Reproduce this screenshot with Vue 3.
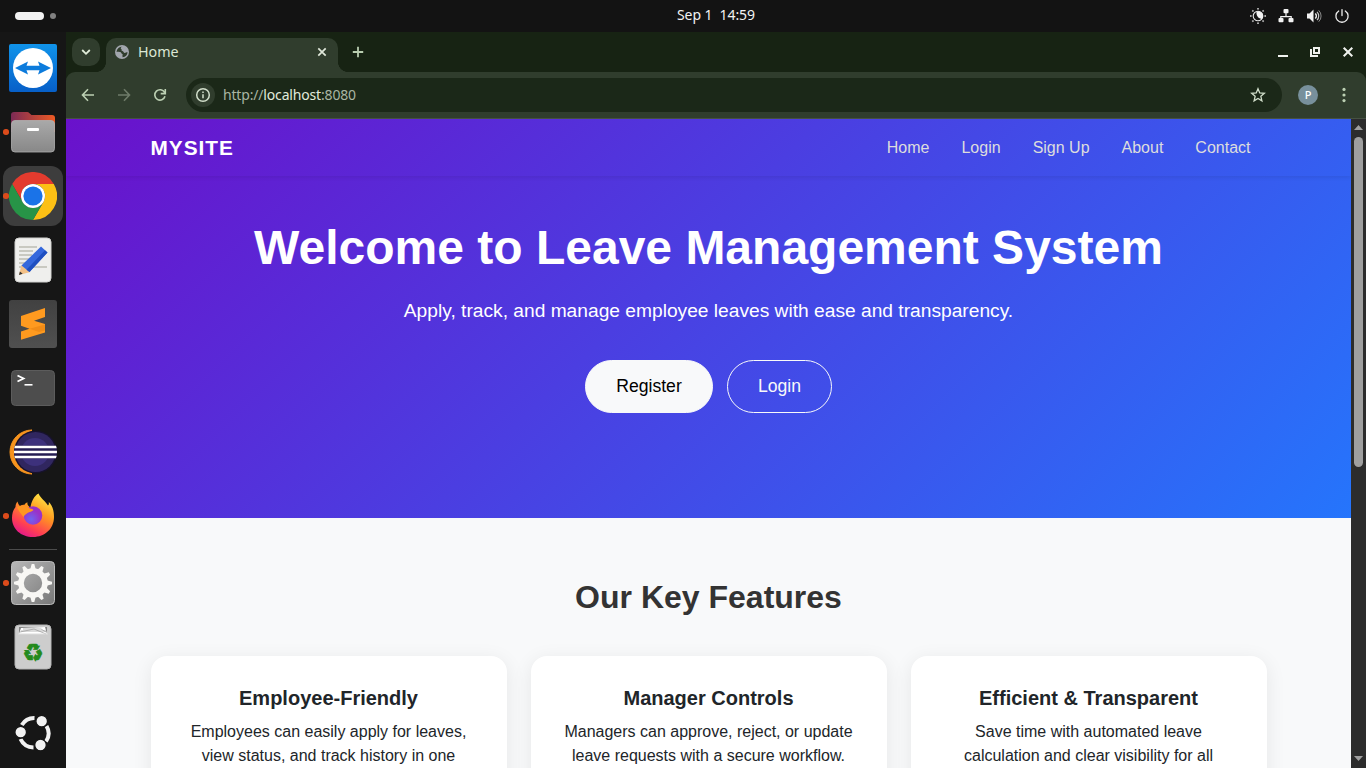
<script setup>
const links = ['Home', 'Login', 'Sign Up', 'About', 'Contact']
const cards = [
  { title: 'Employee-Friendly', lines: ['Employees can easily apply for leaves,', 'view status, and track history in one'] },
  { title: 'Manager Controls', lines: ['Managers can approve, reject, or update', 'leave requests with a secure workflow.'] },
  { title: 'Efficient & Transparent', lines: ['Save time with automated leave', 'calculation and clear visibility for all'] }
]
const teeth = Array.from({ length: 12 }, (_, i) => i * 30)
const rays = Array.from({ length: 8 }, (_, i) => i * 45)
</script>

<template>
  <div class="screen">
    <header class="topbar">
      <div class="workspaces"><span class="pill"></span><span class="dot"></span></div>
      <div class="clock">Sep 1&nbsp; 14:59</div>
      <div class="tray">
        <svg width="16" height="16" viewBox="0 0 16 16">
          <circle cx="8" cy="8" r="4.8" fill="none" stroke="#e8e8e8" stroke-width="1.1" />
          <path d="M6.500 3.600a4.800 4.800 0 0 1 5.500 7.400C8.500 11 6 8 6.500 3.600z" fill="#f2f2f2" />
          <rect v-for="r in rays" :key="r" x="7.2" y="0" width="1.6" height="1.6" fill="#c8c8c8" :transform="`rotate(${r} 8 8)`" />
        </svg>
        <svg width="16" height="16" viewBox="0 0 16 16">
          <path d="M8 5v4M2.8 11V8.7h10.4V11" fill="none" stroke="#f2f2f2" stroke-width="1.2" />
          <rect x="5.5" y="1" width="5" height="4.3" rx="1" fill="#f2f2f2" />
          <rect x="0.5" y="10" width="5" height="4.3" rx="1" fill="#f2f2f2" />
          <rect x="10.5" y="10" width="5" height="4.3" rx="1" fill="#f2f2f2" />
        </svg>
        <svg width="16" height="16" viewBox="0 0 16 16">
          <path d="M1 5.5h2.5L7.5 1.6v12.8L3.500 10.500H1z" fill="#f2f2f2" />
          <path d="M9.300 5.500a3.500 3.500 0 0 1 0 5" fill="none" stroke="#f2f2f2" stroke-width="1.4" />
          <path d="M11 3.800a6 6 0 0 1 0 8.400" fill="none" stroke="#c8c8c8" stroke-width="1.200" />
          <path d="M12.700 2.300a8 8 0 0 1 0 11.400" fill="none" stroke="#8c8c8c" stroke-width="1" />
        </svg>
        <svg width="16" height="16" viewBox="0 0 16 16" fill="none" stroke="#efefef" stroke-width="1.300" stroke-linecap="round">
          <path d="M4.700 3a6.100 6.100 0 1 0 6.600 0M8 1.600v6" />
        </svg>
      </div>
    </header>

    <div class="desktop">
      <aside class="dock">
        <div class="slot">
          <svg width="48" height="48" viewBox="0 0 48 48">
            <defs><linearGradient id="tv" x1="0" y1="0" x2="0" y2="1"><stop offset="0" stop-color="#1093ea" /><stop offset="1" stop-color="#075fc8" /></linearGradient></defs>
            <rect width="48" height="48" rx="2" fill="url(#tv)" />
            <circle cx="24" cy="24" r="20" fill="#fff" />
            <path d="M6 24l13-6.500-1.500 4.300h13L29 17.500l13 6.500-13 6.500 1.500-4.300h-13L19 30.500z" fill="#0c7bdc" />
          </svg>
        </div>
        <div class="slot run">
          <svg width="48" height="48" viewBox="0 0 48 48">
            <defs>
              <linearGradient id="fd" x1="0" y1="0" x2="1" y2="0"><stop offset="0" stop-color="#7b2a55" /><stop offset="1" stop-color="#ee5a24" /></linearGradient>
              <linearGradient id="gr" x1="0" y1="0" x2="0" y2="1"><stop offset="0" stop-color="#a9a9a9" /><stop offset="1" stop-color="#888" /></linearGradient>
            </defs>
            <path d="M2 7a3 3 0 0 1 3-3h13q1.500 0 2.500 1.200L22.500 7H43a3 3 0 0 1 3 3v14H2z" fill="url(#fd)" />
            <rect x="2.500" y="12.500" width="43" height="31.500" rx="3.500" fill="url(#gr)" stroke="#b0b0b0" stroke-width=".8" />
            <rect x="18" y="20" width="12" height="3" rx="1" fill="#fff" />
          </svg>
        </div>
        <div class="slot run active">
          <svg width="48" height="48" viewBox="0 0 48 48">
            <path d="M3.200 12a24 24 0 0 1 41.600 0H24a12 12 0 0 0-10.400 18z" fill="#e33b2e" />
            <path d="M44.800 12A24 24 0 0 1 24 48l10.400-18A12 12 0 0 0 24 12z" fill="#fcc015" />
            <path d="M3.200 12A24 24 0 0 0 24 48l10.400-18a12 12 0 0 1-20.800 0z" fill="#279447" />
            <circle cx="24" cy="24" r="12" fill="#fff" /><circle cx="24" cy="24" r="9.600" fill="#1a73e8" />
          </svg>
        </div>
        <div class="slot">
          <svg width="48" height="48" viewBox="0 0 48 48">
            <rect x="6" y="2" width="36" height="44" rx="4" fill="#efefed" stroke="#d2d2d0" />
            <path d="M10 11h18M10 15h14M10 19h13M10 23h11M10 27h9M10 31h28" stroke="#bdbdb3" stroke-width="1.700" />
            <path d="M10 39l2.500-10 9 7z" fill="#f2c086" /><path d="M10 39l.9-3.500 2.800 2.300z" fill="#333" />
            <path d="M12.500 29.500L32 10.500l6.500 6L20.500 36z" fill="#3568dc" />
            <path d="M17.500 33.700L36 14.200l2.500 2.300L20.500 36z" fill="#1f4fc0" />
          </svg>
        </div>
        <div class="slot">
          <svg width="48" height="48" viewBox="0 0 48 48">
            <defs><linearGradient id="sb" x1="0" y1="0" x2="0" y2="1"><stop offset="0" stop-color="#414141" /><stop offset="1" stop-color="#505050" /></linearGradient></defs>
            <rect width="48" height="48" rx="3" fill="url(#sb)" />
            <path d="M12 16l24-8v9l-11 3.700 11 3.300v8.500L12 39.700V31.500l8.500-2.700L12 25.800z" fill="#ff9a1f" />
            <path d="M20.500 28.800L36 24.500v6l-6 1.500z" fill="#f18c17" />
          </svg>
        </div>
        <div class="slot">
          <svg width="48" height="48" viewBox="0 0 48 48">
            <rect x="2.500" y="6.500" width="43" height="35" rx="4" fill="#4d4d4d" stroke="#5c5c5c" />
            <path d="M8.500 11.500l6 3-6 3" fill="none" stroke="#fff" stroke-width="1.900" /><path d="M15.500 20.800h8" stroke="#fff" stroke-width="1.600" />
          </svg>
        </div>
        <div class="slot">
          <svg width="48" height="48" viewBox="0 0 48 48">
            <defs><clipPath id="ec"><circle cx="26.500" cy="24" r="21.500" /></clipPath></defs>
            <path d="M23 2a22 22 0 0 0 0 44A27 27 0 0 1 23 2z" fill="#f7941e" stroke="#f7941e" stroke-width="1" />
            <circle cx="26.500" cy="24" r="21.500" fill="#17122d" /><circle cx="26.500" cy="24" r="20" fill="#30265f" />
            <circle cx="26" cy="24" r="14" fill="#3d317c" />
            <g clip-path="url(#ec)"><path d="M4 24h44" stroke="#251d52" stroke-width="13" /><path d="M4 19h44M4 24h44M4 29h44" stroke="#fff" stroke-width="2.300" /></g>
          </svg>
        </div>
        <div class="slot run">
          <svg width="48" height="48" viewBox="0 0 48 48">
            <defs>
              <linearGradient id="ff" x1=".8" y1="0" x2=".25" y2="1"><stop offset="0" stop-color="#fff14a" /><stop offset=".4" stop-color="#ff9820" /><stop offset=".75" stop-color="#ff4052" /><stop offset="1" stop-color="#e01590" /></linearGradient>
              <radialGradient id="fp" cx=".4" cy=".7"><stop offset="0" stop-color="#6e63f2" /><stop offset="1" stop-color="#9a32c8" /></radialGradient>
            </defs>
            <path d="M29.500 1.500c2 5 7 7.500 9.500 12 1-1 1-2 .8-3.500C44 14 45 20 45 25c0 11.500-9 20-21 20S3 37 3 26c0-5 1.500-8.500 3.500-11 0-2 .7-4 2-5.500.5 2 1.500 3.500 2.500 4.500 1.500-1 3-1.200 4.500-1.200.5-1 1.500-2 3-2.500-.5 2 .5 3.500 3 5.500C22 10 25 4 29.500 1.500z" fill="url(#ff)" />
            <circle cx="24" cy="23.500" r="9.300" fill="url(#fp)" />
            <path d="M8 15c5-2 9-2 13 1.500 1.500.5 3 .5 3.500 1.500-1.500 1.800-4 2-6 3-1 1.200-3 1.500-4 4-3-4-5-6-6.500-10z" fill="#ff9722" />
          </svg>
        </div>
        <div class="divider"></div>
        <div class="slot run">
          <svg width="48" height="48" viewBox="0 0 48 48">
            <defs><linearGradient id="st" x1="0" y1="0" x2="1" y2="1"><stop offset="0" stop-color="#b8b8b8" /><stop offset="1" stop-color="#777" /></linearGradient></defs>
            <rect x="2.500" y="2.500" width="43" height="43" rx="4" fill="url(#st)" stroke="#bbb" />
            <circle cx="24" cy="24" r="12" fill="none" stroke="#f8f7f4" stroke-width="5.600" />
            <path v-for="t in teeth" :key="t" d="M21.200 10.500L22.700 5h2.600l1.500 5.500z" fill="#f8f7f4" :transform="`rotate(${t} 24 24)`" />
          </svg>
        </div>
        <div class="slot">
          <svg width="48" height="48" viewBox="0 0 48 48">
            <rect x="6" y="2" width="36" height="44" rx="4" fill="#cdcdcd" stroke="#b4b4b4" />
            <path d="M10 4h28v7H10z" fill="#858585" /><path d="M10 11l2-6 24-1 2 7z" fill="#fff" />
            <path d="M11 9l14-3 12 5M14 6h18l5 3M12 8h25" stroke="#999" stroke-width=".7" fill="none" />
            <path d="M9 11h30" stroke="#ddd" />
            <text x="24" y="38" class="recycle">♻</text>
          </svg>
        </div>
        <svg class="ubuntu" width="36" height="36" viewBox="0 0 36 36">
          <g fill="none" stroke="#f2f2f2" stroke-width="4">
            <path d="M6.800 10A14.500 14.500 0 0 1 19.500 3M31.500 11A14.500 14.500 0 0 1 31 26.500M5.500 24a14.500 14.500 0 0 0 13 8.400" />
          </g>
          <g fill="#f2f2f2" stroke="#161616" stroke-width="1.300"><circle cx="5.700" cy="17.200" r="5.800" /><circle cx="26.700" cy="6.200" r="5.800" /><circle cx="25.500" cy="30" r="5.800" /></g>
        </svg>
      </aside>

      <div class="browser">
        <div class="tabstrip">
          <div class="tabsearch"><svg width="10" height="10" viewBox="0 0 10 10"><path d="M1.200 3L5 6.800 8.800 3" /></svg></div>
          <div class="tab">
            <svg width="14" height="14" viewBox="0 0 14 14"><circle cx="7" cy="7" r="7" fill="#a2a6ad" /><path d="M7.500 1.800c-1.500.4-2.500 1.200-1.300 2.200 1.200.8-.5 1.600 1.200 2 1.600.3.800 1.800 2.200 1.900 1 .1 1.500-.6 3-.6a5.500 5.500 0 0 1-5 4.900c-.2-1.300-.2-2 .1-2.900-1.800-.2-1-2.200-2.800-2.300-1.500-.1-2-.2-3.400-.1a5.600 5.600 0 0 1 6-5.100z" fill="#303d2d" /></svg>
            <span>Home</span>
            <svg class="tabclose" width="10" height="10" viewBox="0 0 10 10"><path d="M1.300 1.300l7.400 7.400M8.700 1.300L1.300 8.700" /></svg>
          </div>
          <svg class="newtab" width="12" height="12" viewBox="0 0 12 12"><path d="M6 .8v10.400M.8 6h10.400" /></svg>
          <div class="wincontrols">
            <svg width="12" height="12" viewBox="0 0 12 12"><path d="M1 10h10" /></svg>
            <svg width="12" height="12" viewBox="0 0 12 12"><path d="M5 2h5v5H5zM2 3v7h7" /></svg>
            <svg width="12" height="12" viewBox="0 0 12 12"><path d="M1.700 1.700l8.600 8.600M10.300 1.700l-8.600 8.600" /></svg>
          </div>
        </div>
        <div class="toolbar">
          <svg width="16" height="16" viewBox="0 0 16 16"><path d="M14 8H2.700M8 2.300L2.500 8 8 13.700" /></svg>
          <svg class="dim" width="16" height="16" viewBox="0 0 16 16"><path d="M2 8h11.300M8 2.300L13.500 8 8 13.700" /></svg>
          <svg width="16" height="16" viewBox="0 0 16 16"><path d="M13 9.300A5.200 5.200 0 1 1 12.600 5.500M13.300 2v4.600H8.700" /></svg>
          <div class="omnibox">
            <span class="info"><svg width="16" height="16" viewBox="0 0 16 16"><circle cx="8" cy="8" r="6.300" /><path d="M8 7.300v4M8 4.500v1.600" /></svg></span>
            <span class="url"><i>http://</i>localhost<i>:8080</i></span>
            <svg class="star" width="16" height="16" viewBox="0 0 16 16"><path d="M8 1.700l1.750 4.250 4.600.4-3.500 3 1.050 4.500L8 11.450l-3.900 2.400 1.050-4.500-3.500-3 4.600-.4z" /></svg>
          </div>
          <div class="avatar">P</div>
          <svg class="kebab" width="4" height="16" viewBox="0 0 4 16"><circle cx="2" cy="2.400" r="1.600" /><circle cx="2" cy="8" r="1.600" /><circle cx="2" cy="13.600" r="1.600" /></svg>
        </div>

        <div class="viewport">
          <div class="page">
            <section class="hero">
              <nav>
                <b>MYSITE</b>
                <div class="links"><a v-for="l in links" :key="l">{{ l }}</a></div>
              </nav>
              <h1>Welcome to Leave Management System</h1>
              <p>Apply, track, and manage employee leaves with ease and transparency.</p>
              <div class="buttons"><button class="solid">Register</button><button class="outline">Login</button></div>
            </section>
            <section class="features">
              <h2>Our Key Features</h2>
              <div class="cards">
                <article v-for="c in cards" :key="c.title">
                  <h3>{{ c.title }}</h3>
                  <div v-for="line in c.lines" :key="line">{{ line }}</div>
                </article>
              </div>
            </section>
          </div>
          <div class="scrollbar">
            <svg width="9" height="5" viewBox="0 0 9 5"><path d="M4.500 0L9 5H0z" /></svg>
            <span></span>
            <svg class="down" width="9" height="5" viewBox="0 0 9 5"><path d="M0 0h9L4.500 5z" /></svg>
          </div>
        </div>
      </div>
    </div>
  </div>
</template>

<style>
body { margin: 0; background: #141414; overflow: hidden; }
</style>

<style scoped>
* { box-sizing: border-box; }
svg { display: block; flex: none; }
.screen { width: 1366px; height: 768px; overflow: hidden; display: flex; flex-direction: column; background: #161616; font-family: "Noto Sans", sans-serif; }
.topbar { height: 32px; flex: none; background: #131313; display: grid; grid-template-columns: 612px auto 1fr; align-items: center; color: #f2f2f2; }
.workspaces { display: flex; align-items: center; gap: 6px; padding-left: 15px; }
.pill { width: 29px; height: 8px; border-radius: 4px; background: #f2f2f2; }
.dot { width: 6px; height: 6px; border-radius: 50%; background: #818181; }
.clock { font-size: 14px; line-height: 20px; letter-spacing: -.08px; padding: 0 0 2px 65px; white-space: pre; }
.tray { display: flex; justify-content: flex-end; gap: 12px; padding-right: 16px; }
.desktop { display: flex; flex: 1; min-height: 0; }
.dock { width: 66px; flex: none; background: #161616; display: flex; flex-direction: column; align-items: center; padding-top: 6px; }
.slot { width: 60px; height: 60px; flex: none; margin-bottom: 4px; border-radius: 12px; display: grid; place-items: center; position: relative; }
.active { background: #3d3d3d; }
.run::before { content: ""; position: absolute; left: 0; top: 27px; width: 5.5px; height: 5.5px; border-radius: 50%; background: #dc4b1b; }
.divider { height: 1px; width: 48px; background: #4c4c4c; margin-top: -1px; margin-bottom: 3px; flex: none; }
.recycle { font: bold 24px "DejaVu Sans", sans-serif; text-anchor: middle; fill: #238a1c; stroke: #238a1c; stroke-width: .7px; }
.ubuntu { margin: 34px 1px 0 0; }
.browser { width: 1300px; display: flex; flex-direction: column; background: #172313; }
.tabstrip { height: 40px; flex: none; display: flex; padding-left: 6px; padding-top: 6px; }
.tabsearch { width: 28px; height: 28px; border-radius: 10px; background: #303d2d; display: grid; place-items: center; }
.tabsearch svg { fill: none; stroke: #e0ecd9; stroke-width: 1.8; }
.tab { margin-left: 6px; width: 232px; height: 34px; border-radius: 10px 10px 0 0; background: #303d2d; display: flex; align-items: center; padding: 0 11px 6px 9px; color: #dce7d5; font-size: 14.3px; position: relative; }
.tab::before, .tab::after { content: ""; position: absolute; bottom: 0; width: 10px; height: 10px; }
.tab::before { left: -10px; background: radial-gradient(circle at 0 0, transparent 9.7px, #303d2d 10.2px); }
.tab::after { right: -10px; background: radial-gradient(circle at 100% 0, transparent 9.7px, #303d2d 10.2px); }
.tab span { margin-left: 9px; line-height: 20px; }
.tabclose { margin-left: auto; stroke: #e0e8da; stroke-width: 1.7; }
.newtab { margin: 8px 0 0 14px; stroke: #b9cdb0; stroke-width: 1.8; }
.wincontrols { margin: 8px 12px 0 auto; display: flex; gap: 21px; }
.wincontrols svg { fill: none; stroke: #f0f2ee; stroke-width: 2; }
.wincontrols svg:nth-child(2) { margin-left: -1px; }
.toolbar { height: 47px; flex: none; background: #303d2d; border-bottom: 1px solid #465143; border-radius: 9px 9px 0 0; display: flex; align-items: center; padding: 0 20px 0 14px; }
.toolbar > svg { fill: none; stroke: #bcd0b3; stroke-width: 1.6; margin-right: 20px; }
.toolbar .dim { stroke: #6e7b69; }
.toolbar > .kebab { fill: #bcd0b3; stroke: none; margin: 0 0 0 24px; }
.omnibox { margin-left: -2px; width: 1096px; height: 34px; border-radius: 17px; background: #1b2818; display: flex; align-items: center; padding: 0 16px 0 5px; }
.info { width: 24px; height: 24px; border-radius: 50%; background: #303d2d; display: grid; place-items: center; }
.info svg, .star { fill: none; stroke: #d2dfcb; stroke-width: 1.5; }
.star { stroke-width: 1.3; margin-left: auto; }
.url { margin-left: 8px; font-size: 14px; color: #e2ebdc; line-height: 20px; letter-spacing: -.17px; }
.url i { font-style: normal; color: #a9b5a3; }
.avatar { margin-left: 16px; width: 20px; height: 20px; border-radius: 50%; background: #78909c; color: #fff; font-size: 11px; font-weight: 500; line-height: 20px; text-align: center; }
.viewport { flex: 1; min-height: 0; display: flex; }
.page { width: 1285px; overflow: hidden; background: #f8f9fa; font-family: "Liberation Sans", Arial, sans-serif; text-align: center; color: #212529; }
.hero { height: 399px; background: linear-gradient(135deg, #6a11cb, #2575fc); color: #fff; }
nav { height: 57px; padding: 0 100.5px 0 84.5px; display: flex; justify-content: space-between; align-items: center; box-shadow: 0 2px 4px rgba(0, 0, 0, .075); }
nav b { font-size: 20.8px; letter-spacing: 1px; line-height: 30px; padding-top: 1px; }
.links { display: flex; gap: 32px; font-size: 16px; color: #ddd; }
h1 { margin: 43px 0 0; font-size: 48px; line-height: 58px; }
.hero p { margin: 19px 0 0; font-size: 19.2px; line-height: 29px; }
.buttons { margin-top: 35px; display: flex; justify-content: center; gap: 14px; }
button { height: 53px; border-radius: 27px; border: 1px solid #f8f9fa; font: 17.6px "Liberation Sans", Arial, sans-serif; padding: 0; }
.solid { width: 128px; background: #f8f9fa; color: #000; }
.outline { width: 105px; background: transparent; color: #f8f9fa; }
.features { padding: 60px 84.5px 0; }
h2 { margin: 0; font-size: 32px; line-height: 38px; color: #333; }
.cards { display: grid; grid-template-columns: repeat(3, 356px); gap: 24px; margin-top: 40px; }
article { height: 190px; border-radius: 16px; background: #fff; box-shadow: 0 4px 20px rgba(0, 0, 0, .08); padding-top: 30px; font-size: 16px; line-height: 24px; }
h3 { margin: 0 0 8px; font-size: 20px; line-height: 24px; padding-bottom: 2px; }
.scrollbar { width: 15px; background: #2c2c2c; display: flex; flex-direction: column; align-items: center; padding-top: 6px; }
.scrollbar svg { fill: #9f9f9f; }
.scrollbar span { width: 9px; height: 330px; margin-top: 7px; border-radius: 5px; background: #9f9f9f; }
.down { margin-top: auto; margin-bottom: 7px; }
</style>
